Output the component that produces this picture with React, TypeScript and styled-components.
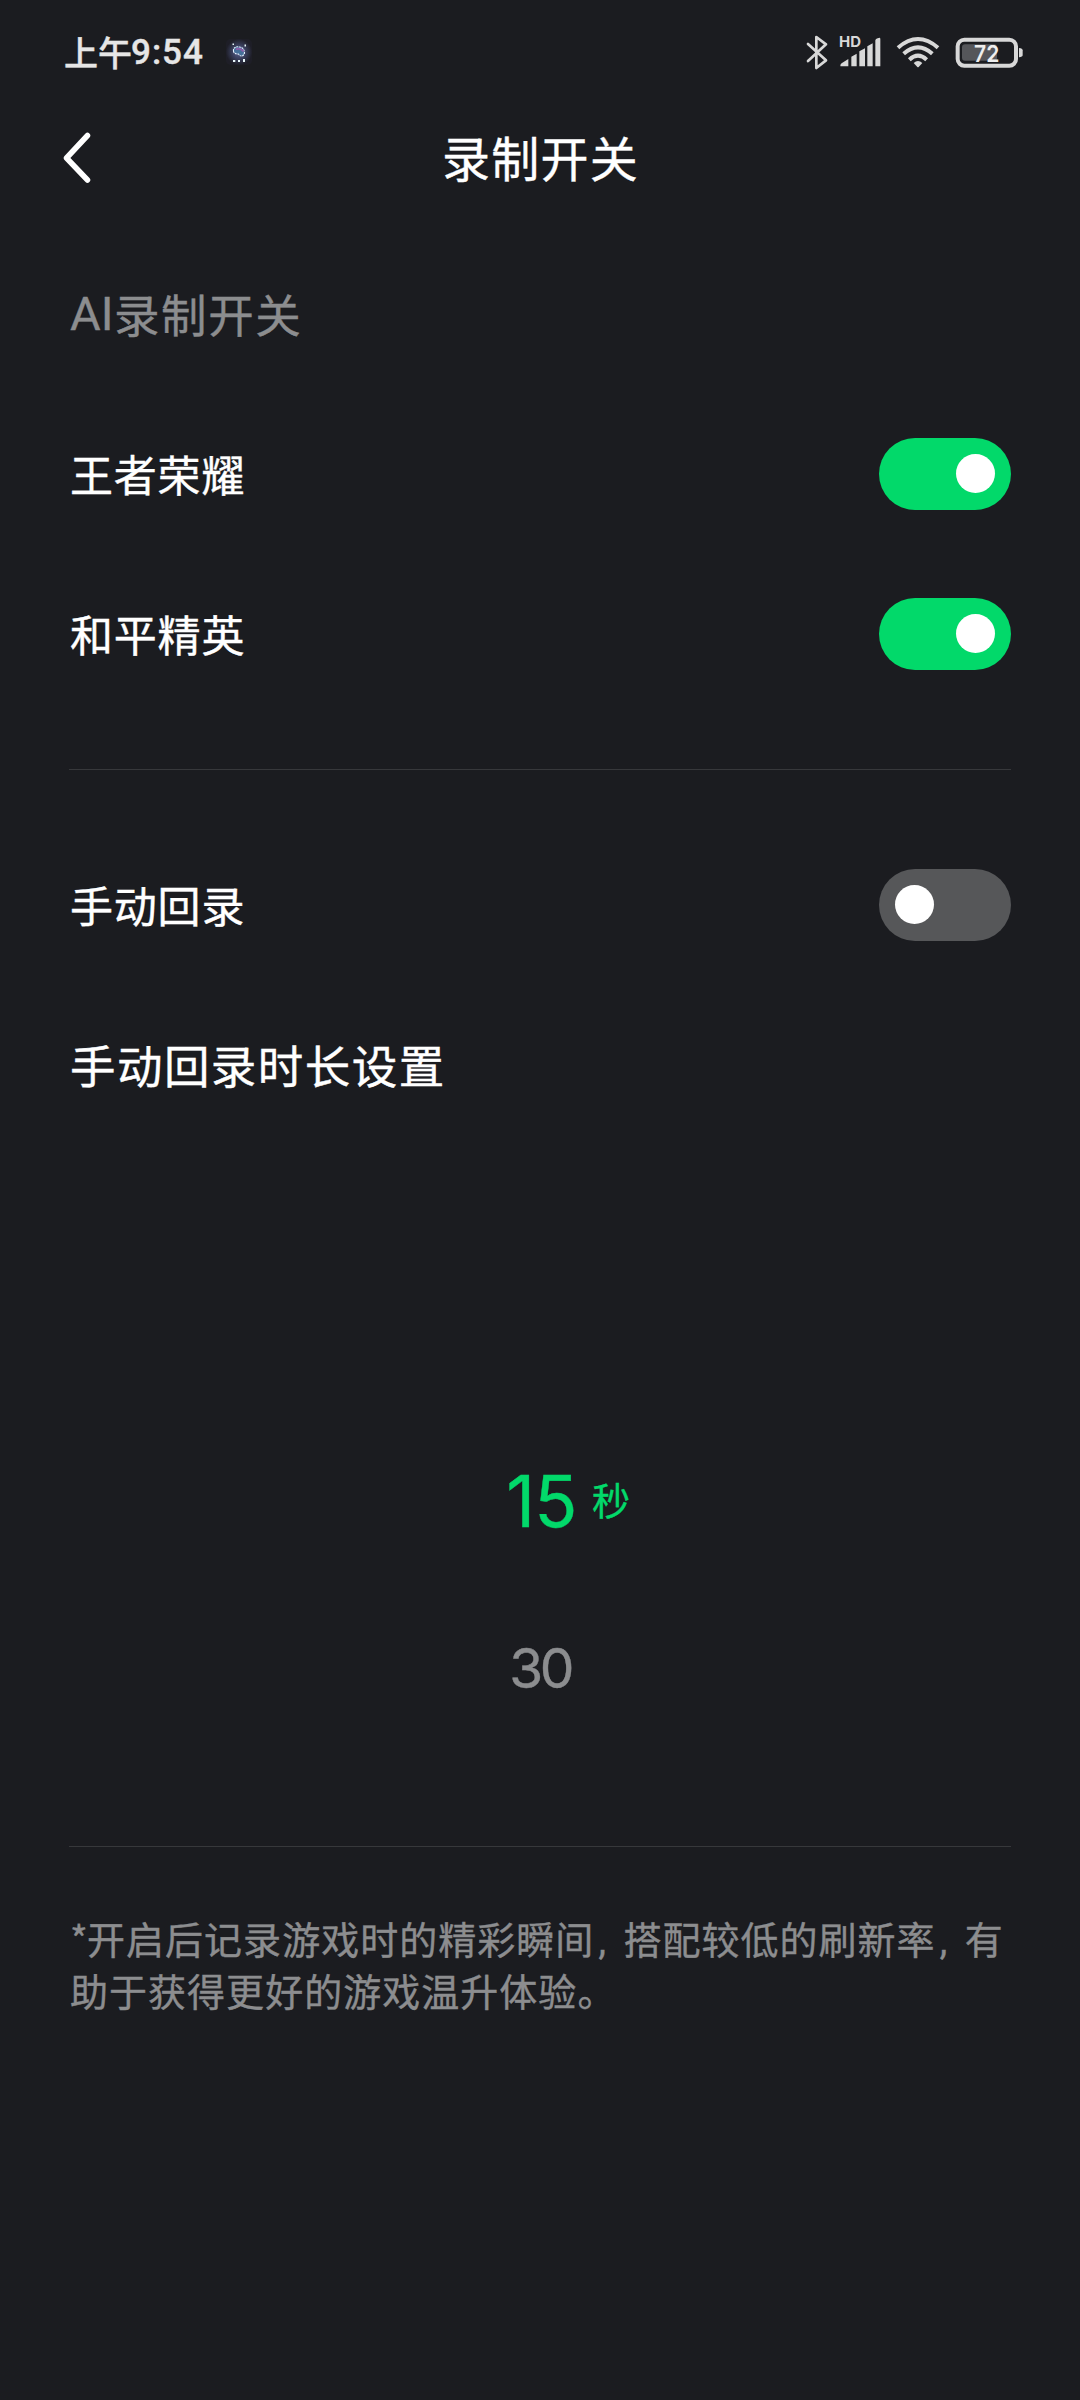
import React, { useState } from "react";
import styled, { createGlobalStyle } from "styled-components";

const GlobalStyle = createGlobalStyle`
  * { box-sizing: border-box; }
  body { margin: 0; background: #1b1c20; }
`;

const cjk = `"Noto Sans CJK SC", sans-serif`;
const latin = `Inter, "Noto Sans CJK SC", sans-serif`;

const Screen = styled.main`
  display: flex;
  flex-direction: column;
  width: 1080px;
  height: 2400px;
  overflow: hidden;
  background: #1b1c20;
  color: #fff;
  font-family: ${cjk};
  -webkit-text-stroke: 0.4px currentColor;
`;

const StatusBar = styled.div`
  display: flex;
  align-items: center;
  justify-content: space-between;
  height: 104px;
  padding: 0 56px 0 64px;
  color: #e6e6e6;
`;

const StatusSide = styled.div`
  display: flex;
  align-items: center;
`;

const Clock = styled.div`
  display: flex;
  align-items: center;
  width: 162px;
  line-height: 50px;
  white-space: nowrap;
`;

const ClockPeriod = styled.span`
  width: 67px;
  padding-bottom: 1px;
  font-size: 34px;
  font-weight: 500;
`;

const ClockTime = styled.span`
  padding-top: 1px;
  font-family: Roboto, ${cjk};
  font-size: 35px;
  font-weight: 500;
  letter-spacing: 1px;
`;

const StatusIcon = styled.svg<{ $w: number; $h: number; $gap?: number }>`
  display: block;
  flex: none;
  overflow: visible;
  width: ${(p) => p.$w}px;
  height: ${(p) => p.$h}px;
  margin-left: ${(p) => p.$gap ?? 0}px;
  -webkit-text-stroke: 0;
`;

const Header = styled.header`
  display: grid;
  grid-template-columns: 100px 1fr 100px;
  align-items: center;
  height: 106px;
  padding: 0 40px;
`;

const BackButton = styled.button`
  display: flex;
  align-items: center;
  width: 100px;
  height: 100px;
  padding: 0 0 1px 21px;
  border: 0;
  background: none;
  color: #fff;
`;

const Title = styled.h1`
  margin: 0;
  padding: 0 0 3px 1px;
  text-align: center;
  font-size: 48px;
  line-height: 72px;
  font-weight: 400;
  letter-spacing: 1.2px;
`;

const Content = styled.section`
  display: flex;
  flex-direction: column;
  padding: 0 69px;
`;

const SectionTitle = styled.h2`
  display: flex;
  align-items: center;
  margin: 0;
  height: 184px;
  padding-top: 21px;
  color: #8c8d8f;
  font-size: 45.5px;
  font-weight: 400;
  letter-spacing: 1.6px;
`;

const SectionPrefix = styled.span`
  width: 45px;
  padding: 2px 0 0 1px;
  font-family: Roboto, ${cjk};
  font-size: 47px;
  letter-spacing: 0;
`;

const Row = styled.div`
  display: flex;
  align-items: center;
  justify-content: space-between;
  height: 160px;
`;

const Label = styled.span<{ $large?: boolean }>`
  padding: 0 0 3px 1px;
  font-size: ${(p) => (p.$large ? 45.5 : 43)}px;
  line-height: 64px;
  letter-spacing: ${(p) => (p.$large ? 1.45 : 0.8)}px;
`;

const Toggle = styled.button<{ $on: boolean }>`
  display: flex;
  align-items: center;
  justify-content: ${(p) => (p.$on ? "flex-end" : "flex-start")};
  width: 132px;
  height: 72px;
  padding: 0 16px 1px;
  border: 0;
  border-radius: 36px;
  background: ${(p) => (p.$on ? "#02d96a" : "#565759")};
`;

const Knob = styled.span`
  width: 39px;
  height: 39px;
  border-radius: 50%;
  background: #fff;
`;

const Divider = styled.hr<{ $before?: number; $after?: number }>`
  width: 100%;
  height: 1px;
  margin: ${(p) => p.$before ?? 0}px 0 ${(p) => p.$after ?? 0}px;
  border: 0;
  background: #37383b;
`;

const Picker = styled.div`
  display: flex;
  flex-direction: column;
  height: 701px;
  padding-top: 272px;
`;

const PickerItem = styled.div<{ $active?: boolean }>`
  display: grid;
  grid-template-columns: 1fr 80px 1fr;
  align-items: center;
  height: 167px;
  color: ${(p) => (p.$active ? "#02d96a" : "#8c8d8f")};
`;

const PickerValue = styled.span<{ $active?: boolean }>`
  grid-column: 2;
  padding-left: ${(p) => (p.$active ? 3 : 0)}px;
  text-align: center;
  font-family: ${latin};
  font-size: ${(p) => (p.$active ? 71 : 55)}px;
  line-height: 90px;
  letter-spacing: ${(p) => (p.$active ? -0.7 : -3.5)}px;
`;

const PickerUnit = styled.span`
  padding: 0 0 3px 12px;
  font-size: 38px;
  line-height: 56px;
`;

const Note = styled.p`
  margin: 0;
  padding-left: 1px;
  color: #8c8d8f;
  font-size: 38px;
  line-height: 52px;
  letter-spacing: 1.03px;
  white-space: nowrap;
`;

const Star = styled.span`
  display: inline-block;
  width: 17px;
`;

const Comma = styled.span`
  display: inline-block;
  width: 29px;
  padding-left: 4px;
  font-family: Roboto, ${cjk};
  line-height: 40px;
`;

const AppBadge = () => (
  <StatusIcon $w={26} $h={26} viewBox="0 0 26 26">
    <defs>
      <radialGradient id="glow">
        <stop offset="0" stopColor="#5c6390" />
        <stop offset="0.5" stopColor="#3b4160" />
        <stop offset="1" stopColor="#1e1e27" />
      </radialGradient>
    </defs>
    <rect width="26" height="26" rx="5" fill="url(#glow)" />
    <path d="M7.500 12c-.5-3 2.500-5 6-4 3 0 5 3 5 6-1 3.500-4 4-6 1-3 0-5-1-5-3z" fill="#46709a" stroke="#e5f0ff" strokeWidth="1.1" strokeDasharray="2 .7" />
    <path d="M10 10.500c3-2 6 0 7.500 2" stroke="#8e5ca8" strokeWidth="1.8" fill="none" />
    <path d="M7 21h2.300v2H7zm5 0h2v2h-2zm5-1h2v3h-2zM6.500 4.500h1.500v1.500H6.500zm12 1h1.500v2h-1.500z" fill="#e8f7fa" />
  </StatusIcon>
);

const Bluetooth = () => (
  <StatusIcon $w={22} $h={35} viewBox="0 0 66 105">
    <path d="M6 27 60 76 31 99V6L60 28 6 78" fill="none" stroke="#d8d8d8" strokeWidth="8" strokeLinejoin="round" strokeLinecap="round" />
  </StatusIcon>
);

const Signal = () => (
  <StatusIcon $w={42} $h={35} $gap={11} viewBox="0 0 126 105">
    <text x="0" y="37" fontFamily="Inter, sans-serif" fontSize="44" fontWeight="700" fill="#d8d8d8" textLength="66" lengthAdjust="spacingAndGlyphs">HD</text>
    <path d="M4 92Q4 86 9 84L28 72V94H6Q4 94 4 92zM37 65 53 56V94H37zM61 49 78 40V94H61zM85 34 101 25V94H85zM109 16Q110 10 121 8Q124 8 124 12V94H109z" fill="#d8d8d8" />
  </StatusIcon>
);

const Wifi = () => (
  <StatusIcon $w={44} $h={35} $gap={15} viewBox="0 0 132 105">
    <g fill="none" stroke="#d8d8d8" strokeWidth="12" strokeLinecap="butt">
      <path d="M6 38Q66-14 126 38" />
      <path d="M23 56Q66 18 109 56" />
      <path d="M40 74Q66 50 92 74" />
    </g>
    <path d="M53 84Q66 72 79 84L68 96Q66 98 64 96z" fill="#d8d8d8" />
  </StatusIcon>
);

const Battery = () => (
  <StatusIcon $w={69} $h={31} $gap={15} viewBox="0 0 207 93">
    <rect x="8" y="8" width="175" height="78" rx="20" fill="none" stroke="#d8d8d8" strokeWidth="12" />
    <rect x="21" y="22" width="105" height="49" rx="9" fill="#55565a" />
    <path d="M192 33Q203 34 203 40V54Q203 60 192 61z" fill="#d8d8d8" />
    <text x="57" y="74" fontFamily="Inter, sans-serif" fontSize="69" fontWeight="600" fill="#eee" textLength="76" lengthAdjust="spacingAndGlyphs">72</text>
  </StatusIcon>
);

const BackArrow = () => (
  <svg width="32" height="52" viewBox="0 0 32 52">
    <path d="M26.500 4.500 5.500 27l21 22" fill="none" stroke="#fff" strokeWidth="5.500" strokeLinecap="round" strokeLinejoin="round" />
  </svg>
);

function SwitchRow({ name, initial }: { name: string; initial: boolean }) {
  const [on, setOn] = useState(initial);
  return (
    <Row>
      <Label>{name}</Label>
      <Toggle $on={on} role="switch" aria-checked={on} onClick={() => setOn(!on)}>
        <Knob />
      </Toggle>
    </Row>
  );
}

export default function App() {
  return (
    <Screen>
      <GlobalStyle />
      <StatusBar>
        <StatusSide>
          <Clock>
            <ClockPeriod>上午</ClockPeriod>
            <ClockTime>9:54</ClockTime>
          </Clock>
          <AppBadge />
        </StatusSide>
        <StatusSide>
          <Bluetooth />
          <Signal />
          <Wifi />
          <Battery />
        </StatusSide>
      </StatusBar>
      <Header>
        <BackButton>
          <BackArrow />
        </BackButton>
        <Title>录制开关</Title>
      </Header>
      <Content>
        <SectionTitle>
          <SectionPrefix>AI</SectionPrefix>录制开关
        </SectionTitle>
        <SwitchRow name="王者荣耀" initial />
        <SwitchRow name="和平精英" initial />
        <Divider $before={55} $after={55} />
        <SwitchRow name="手动回录" initial={false} />
        <Row>
          <Label $large>手动回录时长设置</Label>
        </Row>
        <Picker>
          <PickerItem $active>
            <PickerValue $active>15</PickerValue>
            <PickerUnit>秒</PickerUnit>
          </PickerItem>
          <PickerItem>
            <PickerValue>30</PickerValue>
          </PickerItem>
        </Picker>
        <Divider $after={65} />
        <Note>
          <Star>*</Star>开启后记录游戏时的精彩瞬间<Comma>,</Comma>搭配较低的刷新率<Comma>,</Comma>有
          <br />
          助于获得更好的游戏温升体验。
        </Note>
      </Content>
    </Screen>
  );
}
